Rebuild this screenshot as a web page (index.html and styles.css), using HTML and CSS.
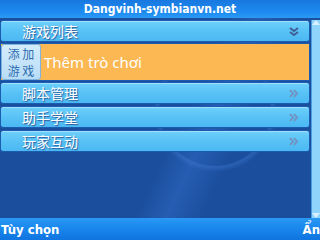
FILE: index.html
```html
<!DOCTYPE html>
<html>
<head>
<meta charset="utf-8">
<link rel="stylesheet" href="styles.css">
</head>
<body>
<div class="screen">
  <div class="title">Dangvinh-symbianvn.net</div>
  <div class="main">
    <div class="list">
      <div class="row head">
        <span class="label">游戏列表</span>
        <svg class="ico" width="10" height="9" viewBox="0 0 10 9"><path d="M1 1 L5 4 L9 1 M1 5 L5 8 L9 5" fill="none" stroke="#3f5f95" stroke-width="2"/></svg>
      </div>
      <div class="row sel">
        <div class="badge"><span>添 加</span><span>游 戏</span></div>
        <span class="seltext">Thêm trò chơi</span>
      </div>
      <div class="row first">
        <span class="label">脚本管理</span>
        <svg class="ico" width="10" height="9" viewBox="0 0 10 9"><path d="M1 1 L4 4.5 L1 8 M5 1 L8 4.5 L5 8" fill="none" stroke="#7390bc" stroke-width="1.9"/></svg>
      </div>
      <div class="row">
        <span class="label">助手学堂</span>
        <svg class="ico" width="10" height="9" viewBox="0 0 10 9"><path d="M1 1 L4 4.5 L1 8 M5 1 L8 4.5 L5 8" fill="none" stroke="#7390bc" stroke-width="1.9"/></svg>
      </div>
      <div class="row">
        <span class="label">玩家互动</span>
        <svg class="ico" width="10" height="9" viewBox="0 0 10 9"><path d="M1 1 L4 4.5 L1 8 M5 1 L8 4.5 L5 8" fill="none" stroke="#7390bc" stroke-width="1.9"/></svg>
      </div>
    </div>
    <div class="scroll">
      <svg class="arr" width="8" height="5" viewBox="0 0 8 5"><path d="M0 5 L4 0 L8 5 Z" fill="#d8f0ff"/></svg>
      <div class="track"></div>
      <svg class="arr" width="8" height="5" viewBox="0 0 8 5"><path d="M0 0 L4 5 L8 0 Z" fill="#d8f0ff"/></svg>
    </div>
  </div>
  <div class="soft">
    <span>Tùy chọn</span>
    <span>Ẩn</span>
  </div>
</div>
</body>
</html>
```
FILE: styles.css
```css
html, body {
  margin: 0;
  padding: 0;
}
body {
  width: 320px;
  height: 240px;
  overflow: hidden;
  background: #1b4f9e;
}
.screen {
  width: 320px;
  height: 240px;
  display: flex;
  flex-direction: column;
  background:
    radial-gradient(circle at 215px 110px, rgba(60,120,210,0) 55px, rgba(70,130,220,0.35) 57px, rgba(60,120,210,0) 62px),
    linear-gradient(115deg, rgba(0,0,0,0) 55%, rgba(60,120,215,0.35) 62%, rgba(0,0,0,0) 70%),
    #1b4f9e;
}
.title {
  height: 18px;
  display: flex;
  align-items: center;
  justify-content: center;
  color: #fff;
  font: bold 12px "DejaVu Sans Condensed", "DejaVu Sans", sans-serif;
  background: linear-gradient(#1878e0, #1e8cf0 70%, #2b9af4);
}
.main {
  flex: 1;
  display: flex;
  padding-top: 2px;
}
.list {
  flex: 1;
  display: flex;
  flex-direction: column;
}
.row {
  height: 20px;
  margin: 2px 1px 0 0;
  border: 1px solid #1b5cb0;
  border-radius: 3px;
  background: linear-gradient(#6fd0fc, #58c2f6 50%, #4cb8f2);
  box-shadow: inset 0 1px 0 rgba(255,255,255,0.35);
  display: flex;
  align-items: center;
  padding: 0 10px 0 21px;
  justify-content: space-between;
}
.row.head {
  margin-top: 0;
}
.row.first {
  margin-top: 1px;
}
.label {
  color: #fff;
  font: 14px "Noto Sans CJK SC", sans-serif;
  line-height: 16px;
  text-shadow: 1px 1px 1px #2a5c9a;
}
.row.sel {
  height: 36px;
  margin-top: 1px;
  padding: 0;
  justify-content: flex-start;
  background: #fbb853;
  border-color: #1b5cb0;
  border-radius: 0;
  box-shadow: none;
}
.badge {
  width: 40px;
  height: 36px;
  box-sizing: border-box;
  border: 1px solid #7fb4e0;
  border-radius: 3px;
  background: linear-gradient(#d4ecfc, #b8dcf6);
  display: flex;
  flex-direction: column;
  align-items: center;
  justify-content: center;
  color: #2d6db0;
  font: 12px "Noto Sans CJK SC", sans-serif;
  line-height: 17px;
  white-space: pre;
}
.seltext {
  margin-left: 3px;
  color: #fff;
  font: 15px "Noto Sans", sans-serif;
}
.ico {
  display: block;
}
.scroll {
  width: 8px;
  display: flex;
  flex-direction: column;
  background: #8fd4fa;
  border-left: 1px solid #4a9ee0;
}
.arr {
  display: block;
}
.track {
  flex: 1;
}
.soft {
  height: 22px;
  display: flex;
  justify-content: space-between;
  align-items: center;
  padding: 0 0 0 1px;
  color: #fff;
  font: bold 13px "DejaVu Sans Condensed", "DejaVu Sans", sans-serif;
  background: linear-gradient(#2a98f4, #1b8aee 40%, #0f74e0);
}
```
